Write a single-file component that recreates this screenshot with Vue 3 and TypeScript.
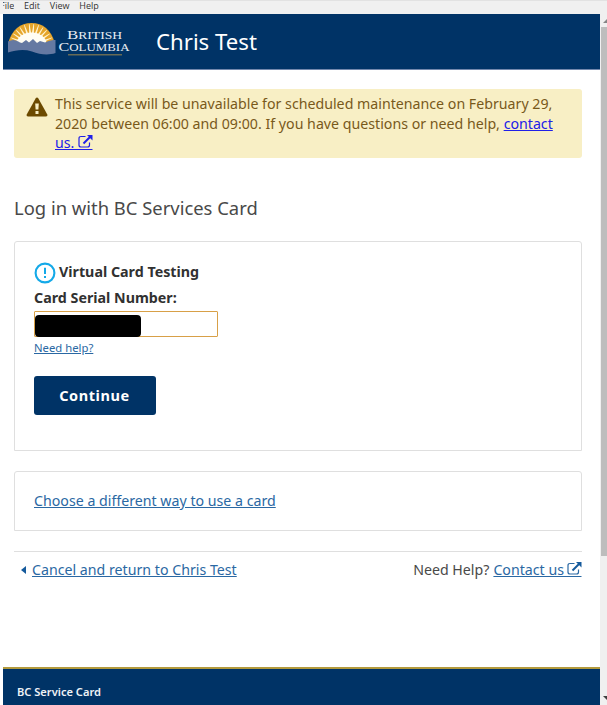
<script setup lang="ts">
const menuItems: string[] = ['File', 'Edit', 'View', 'Help']
const serviceName = 'Chris Test'
const rays: number[] = [-80, -68, -56, -44, -32, -19, -6, 6, 19, 32, 44, 56, 68, 80]
</script>

<template>
  <div class="window">
    <nav class="menubar">
      <span v-for="item in menuItems" :key="item" class="menu-item">{{ item }}</span>
    </nav>
    <div class="viewport">
      <div class="page">
        <header class="header">
          <svg class="logo" width="124" height="36" viewBox="0 0 124 36">
            <defs>
              <clipPath id="sun"><path d="M0.5 20C4 8 12 1 23.5 1S43 8 46.5 20V26H0z" /></clipPath>
            </defs>
            <g clip-path="url(#sun)">
              <rect width="48" height="30" fill="#e5a52b" />
              <path
                v-for="angle in rays"
                :key="angle"
                d="M21.6 24L23.2 2H23.8L25.4 24z"
                fill="#fff4d2"
                :transform="`rotate(${angle} 23.5 24)`"
              />
              <ellipse cx="23.5" cy="22" rx="15" ry="11.5" fill="#fffdf3" />
            </g>
            <path
              d="M0 19.5C4 17 8 17.5 12 20.5L14 21L18 18L21 20.5L25 17L29 21L32 19L37 20.5C41 18.5 45 18 47.5 18V31C40 33.5 32 32.5 24 29.5C16 27 8 28 0 30.5z"
              fill="#6579a2"
            />
            <g class="logo-text">
              <text x="59" y="16.7" font-size="13.5" textLength="55" lengthAdjust="spacingAndGlyphs">B<tspan font-size="10.8">RITISH</tspan></text>
              <text x="50.5" y="28.7" font-size="13.5" textLength="71" lengthAdjust="spacingAndGlyphs">C<tspan font-size="10.8">OLUMBIA</tspan></text>
            </g>
            <rect x="60" y="32" width="54" height="1.5" fill="#686b55" />
          </svg>
          <h1 class="service">{{ serviceName }}</h1>
        </header>

        <main class="content">
          <section class="alert">
            <svg class="warning" width="22" height="20" viewBox="0 0 22 20">
              <path
                d="M11 0.5Q11.8 0.5 12.4 1.4L21.3 17.5Q22 19.5 20 19.5H2Q0 19.5 0.7 17.5L9.6 1.4Q10.2 0.5 11 0.5z"
                fill="#6c4a00"
              />
              <path d="M9.2 6.5H12.8L12.4 12.5H9.6zM9.5 14H12.5V17H9.5z" fill="#f8efc5" />
            </svg>
            <p class="alert-text">
              This service will be unavailable for scheduled maintenance on February 29,<br />
              2020 between 06:00 and 09:00. If you have questions or need help, <a href="#">contact<br />us. <svg
                class="external" width="15" height="14" viewBox="0 0 15 14"
              ><path
                d="M7.5 1.5H3Q1 1.5 1 3.5V10Q1 12 3 12H9.5Q11.5 12 11.5 10V7.5"
                fill="none" stroke="currentColor" stroke-width="1.2"
              /><path d="M5.5 8.5L12 2" stroke="currentColor" stroke-width="2" /><path
                d="M9 0H14.5V5.5z" fill="currentColor"
              /><path d="M0 14.5H14.5" stroke="currentColor" /></svg></a>
            </p>
          </section>

          <h2 class="title">Log in with BC Services Card</h2>

          <section class="card login">
            <div class="card-heading">
              <svg width="22" height="22" viewBox="0 0 22 22">
                <circle cx="11" cy="11" r="9.4" fill="none" stroke="#14a9e8" stroke-width="2.1" />
                <path d="M11 5.7V12M11 14V16" stroke="#14a9e8" stroke-width="2" />
              </svg>
              <h3>Virtual Card Testing</h3>
            </div>
            <label class="label">Card Serial Number:</label>
            <div class="field"><span class="redaction"></span></div>
            <a class="hint" href="#">Need help?</a>
            <button class="continue" type="button">Continue</button>
          </section>

          <section class="card other">
            <a class="choose" href="#">Choose a different way to use a card</a>
          </section>

          <div class="links">
            <div class="cancel">
              <svg width="5" height="8" viewBox="0 0 5 8"><path d="M5 0V8L0 4z" fill="#155a9c" /></svg>
              <a href="#">Cancel and return to {{ serviceName }}</a>
            </div>
            <div class="help">
              <span>Need Help?</span>
              <a href="#">Contact us<svg
                class="external spaced" width="15" height="14" viewBox="0 0 15 14"
              ><path
                d="M7.5 1.5H3Q1 1.5 1 3.5V10Q1 12 3 12H9.5Q11.5 12 11.5 10V7.5"
                fill="none" stroke="currentColor" stroke-width="1.2"
              /><path d="M5.5 8.5L12 2" stroke="#155a9c" stroke-width="2" /><path
                d="M9 0H14.5V5.5z" fill="#155a9c"
              /><path d="M-3.5 14.5H14.5" stroke="currentColor" /></svg></a>
            </div>
          </div>
        </main>

        <footer class="footer">BC Service Card</footer>
      </div>
      <div class="scrollbar">
        <svg class="arrow" width="6" height="13" viewBox="0 0 6 13"><path d="M2 9L6 5V9z" fill="#858585" /></svg>
        <div class="thumb"></div>
        <svg class="arrow down" width="6" height="13" viewBox="0 0 6 13"><path d="M2 4H6V8z" fill="#404040" /></svg>
      </div>
    </div>
  </div>
</template>

<style>
body {
  margin: 0;
  background: #fff;
  overflow: hidden;
}
</style>

<style scoped>
* {
  box-sizing: border-box;
}
.window {
  width: 607px;
  height: 705px;
  display: flex;
  flex-direction: column;
  overflow: hidden;
  font-family: "Noto Sans", sans-serif;
  font-size: 14.2px;
  color: #494949;
}
h1,
h2,
h3,
p {
  margin: 0;
  font-weight: 400;
}
.menubar {
  height: 14px;
  flex: none;
  display: flex;
  gap: 9.8px;
  background: #f0f0f0;
  border-top: 1px solid #e2e2e2;
  font-family: "Open Sans", sans-serif;
  font-size: 9px;
  line-height: 10px;
  color: #333;
}
.menu-item:first-child {
  clip-path: inset(0 0 0 3px);
}
.viewport {
  flex: 1;
  min-height: 0;
  display: flex;
  padding-left: 3px;
}
.page {
  width: 597px;
  display: flex;
  flex-direction: column;
}
.header {
  height: 56px;
  flex: none;
  display: flex;
  background: #003366;
  border-bottom: 1px solid #7388ad;
  padding: 8px 0 0 5px;
}
.logo {
  flex: none;
}
.logo-text {
  font-family: "Liberation Serif", serif;
  fill: #e8edf3;
}
.service {
  margin-left: 24px;
  font-size: 22.2px;
  line-height: 39px;
  white-space: nowrap;
  color: #fff;
}
.content {
  flex: 1;
  padding: 19px 18px 0 11px;
}
.alert {
  height: 69px;
  display: flex;
  padding: 5px 0 0 12px;
  background: #f8efc5;
  border-radius: 3px;
  color: #78591b;
}
.warning {
  flex: none;
  margin-top: 3px;
}
.alert-text {
  margin-left: 7px;
  line-height: 19.5px;
  white-space: nowrap;
}
.alert-text a {
  color: #2020e8;
}
.external {
  vertical-align: -1px;
  overflow: visible;
}
.spaced {
  margin-left: 3px;
}
.title {
  margin-top: 36px;
  font-size: 18.42px;
  line-height: 28px;
}
.card {
  border: 1px solid #dfdfdf;
  border-radius: 3px 3px 0 0;
}
.login {
  height: 210px;
  margin-top: 19px;
  padding: 20px 19px;
  display: flex;
  flex-direction: column;
  align-items: flex-start;
}
.card-heading {
  height: 22px;
  display: flex;
  align-items: center;
  gap: 3px;
}
.card-heading h3,
.label {
  font-size: 14.28px;
  line-height: 20px;
  font-weight: 700;
  color: #313131;
}
.card-heading h3 {
  margin-top: -2px;
}
.label {
  margin-top: 4px;
}
.field {
  width: 184px;
  height: 26px;
  margin-top: 3px;
  padding-top: 3px;
  border: 1px solid #d8a047;
  border-radius: 1px;
}
.redaction {
  display: block;
  width: 106px;
  height: 22px;
  border-radius: 4px;
  background: #000;
}
a {
  color: #2a68a3;
}
.hint {
  margin-top: 2px;
  font-size: 11.3px;
  line-height: 17px;
}
.continue {
  width: 122px;
  height: 39px;
  margin-top: 20px;
  padding: 0 1px 1px 0;
  border: 0;
  border-radius: 3px;
  background: #003366;
  color: #fff;
  font: 700 14.5px/38px "Noto Sans", sans-serif;
  letter-spacing: 0.6px;
}
.other {
  height: 60px;
  margin-top: 20px;
  padding: 18px 19px;
  line-height: 21px;
}
.links {
  display: flex;
  justify-content: space-between;
  margin-top: 20px;
  padding-top: 8px;
  border-top: 1px solid #dfdfdf;
  line-height: 20px;
  white-space: nowrap;
}
.cancel {
  padding-left: 7px;
  display: flex;
  align-items: center;
  gap: 6px;
}
.help {
  display: flex;
  gap: 4px;
}
.footer {
  height: 38px;
  flex: none;
  padding-left: 14px;
  border-top: 2px solid #b39a3c;
  background: #003366;
  color: #eef2f6;
  font-size: 11.1px;
  font-weight: 600;
  line-height: 46px;
}
.scrollbar {
  width: 7px;
  display: flex;
  flex-direction: column;
  align-items: flex-end;
  background: #f0f0f0;
}
.arrow {
  flex: none;
}
.thumb {
  width: 6px;
  height: 529px;
  background: #bdbdbd;
}
.down {
  margin-top: auto;
}
</style>
